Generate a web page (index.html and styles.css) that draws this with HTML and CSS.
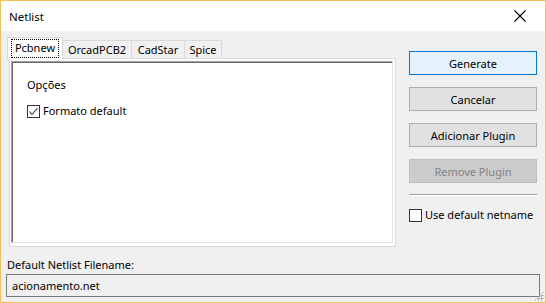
FILE: index.html
```html
<!DOCTYPE html>
<html>
<head>
<meta charset="utf-8">
<link rel="stylesheet" href="styles.css">
</head>
<body>
<div class="window">
  <div class="titlebar">
    <span class="title">Netlist</span>
    <svg class="close" width="12" height="12" viewBox="0 0 12 12"><path d="M0.5 0.5 L11.5 11.5 M11.5 0.5 L0.5 11.5" stroke="#000" stroke-width="1.1" fill="none"/></svg>
  </div>
  <div class="content">
    <div class="top">
      <div class="notebook">
        <div class="tabs">
          <div class="tab selected"><span class="focus">Pcbnew</span></div>
          <div class="tab t-orcad">OrcadPCB2</div>
          <div class="tab t-cad">CadStar</div>
          <div class="tab t-spice">Spice</div>
        </div>
        <div class="page">
          <div class="inner">
            <div class="opts">Opções</div>
            <label class="check"><span class="box checked"><svg width="11" height="11" viewBox="0 0 11 11"><path d="M1.5 5.5 L4 8.5 L9.5 2" stroke="#333" stroke-width="1.1" fill="none"/></svg></span>Formato default</label>
          </div>
        </div>
      </div>
      <div class="side">
        <div class="btn primary">Generate</div>
        <div class="btn">Cancelar</div>
        <div class="btn">Adicionar Plugin</div>
        <div class="btn disabled">Remove Plugin</div>
        <div class="sep"></div>
        <label class="check side-check"><span class="box"></span>Use default netname</label>
      </div>
    </div>
    <div class="fname-label">Default Netlist Filename:</div>
    <div class="field">acionamento.net</div>
  </div>
  <div class="grip"></div>
</div>
</body>
</html>
```

FILE: styles.css
```css
* { box-sizing: border-box; }
html, body { margin: 0; padding: 0; }
body {
  font-family: "Noto Sans", "DejaVu Sans", sans-serif;
  font-size: 11px;
  color: #000;
}
.window {
  position: relative;
  width: 546px;
  height: 303px;
  border: 1px solid #f2c256;
  background: #f0f0f0;
  display: flex;
  flex-direction: column;
  overflow: hidden;
}
.titlebar {
  height: 30px;
  background: #fff;
  display: flex;
  align-items: center;
  justify-content: space-between;
  padding: 0 19px 0 8px;
  flex: none;
}
.title { font-size: 11.5px; }
.close { display: block; }
.content {
  flex: 1;
  display: flex;
  flex-direction: column;
  padding: 6px 5px 0 5px;
}
.top {
  display: flex;
  align-items: flex-start;
}
.notebook {
  width: 389px;
  margin-left: 1px;
}
.tabs {
  display: flex;
  align-items: flex-end;
  height: 21px;
  position: relative;
  z-index: 1;
}
.tab {
  height: 18px;
  border: 1px solid #d9d9d9;
  border-bottom: none;
  background: #f0f0f0;
  display: flex;
  align-items: center;
  justify-content: center;
  line-height: 1;
  margin-left: -1px;
  white-space: nowrap;
}
.tab.selected {
  background: #fff;
  width: 56px;
  margin-left: 0;
  margin-right: -1px;
  position: relative;
  z-index: 2;
  margin-bottom: -1px;
  height: 22px;
  padding-bottom: 1px;
}
.t-orcad { width: 70px; margin-left: 0; }
.t-cad { width: 54px; }
.t-spice { width: 38px; }
.focus {
  outline: 1px dotted #000;
  outline-offset: 0;
  padding: 2px 3px 3px 3px;
  line-height: 12px;
}
.page {
  margin-left: 2px;
  height: 189px;
  border: 1px solid #d9d9d9;
  background: #fff;
  padding: 2px 2px 3px 1px;
  display: flex;
}
.inner {
  flex: 1;
  border-top: 1px solid #a0a0a0;
  border-left: 1px solid #a0a0a0;
  border-right: 1px solid #e3e3e3;
  border-bottom: 1px solid #e3e3e3;
  box-shadow: inset 1px 1px 0 #696969;
  padding: 15px 0 0 15px;
}
.opts { line-height: 16px; }
.check {
  display: flex;
  align-items: center;
  line-height: 16px;
  white-space: nowrap;
}
.inner .check { margin-top: 10px; }
.box {
  width: 13px;
  height: 13px;
  border: 1px solid #333;
  background: #fff;
  margin-right: 3px;
  display: flex;
  align-items: center;
  justify-content: center;
  flex: none;
}
.side {
  margin-left: 13px;
  width: 128px;
  padding-top: 14px;
  display: flex;
  flex-direction: column;
  gap: 12px;
}
.btn {
  height: 24px;
  border: 1px solid #adadad;
  background: #e1e1e1;
  display: flex;
  align-items: center;
  justify-content: center;
  line-height: 1;
}
.btn.primary {
  border-color: #0078d7;
  background: #e5f1fb;
}
.btn.disabled {
  border-color: #bfbfbf;
  background: #cccccc;
  color: #838383;
}
.sep {
  height: 2px;
  border-top: 1px solid #a0a0a0;
  border-bottom: 1px solid #fff;
  margin-top: -1px;
}
.side-check { margin-top: -1px; }
.fname-label {
  margin-top: 10px;
  margin-left: 1px;
  line-height: 16px;
}
.field {
  margin-top: 1px;
  width: 534px;
  height: 23px;
  border: 1px solid #7a7a7a;
  background: #f0f0f0;
  padding-left: 5px;
  display: flex;
  align-items: center;
}
.grip {
  position: absolute;
  right: 1px;
  bottom: 1px;
  width: 10px;
  height: 10px;
  background:
    radial-gradient(circle, #b8b8b8 1px, transparent 1.2px) 0 0 / 3px 3px;
  clip-path: polygon(100% 0, 100% 100%, 0 100%);
}
```
